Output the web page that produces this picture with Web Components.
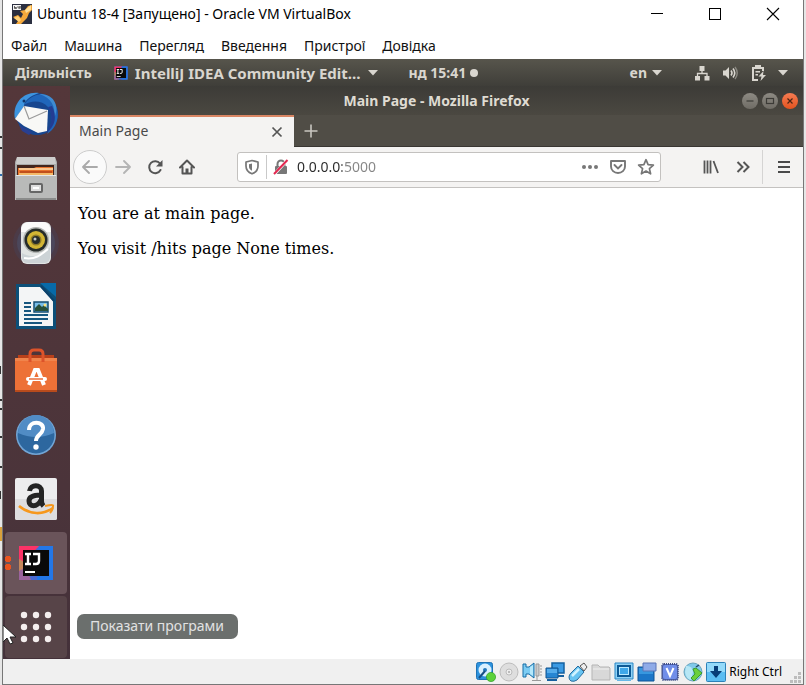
<!DOCTYPE html>
<html lang="uk">
<head>
<meta charset="utf-8">
<title>Ubuntu 18-4 [Запущено] - Oracle VM VirtualBox</title>
<style>
html,body{margin:0;height:100%}
body{background:#fff;overflow:hidden}
</style>
</head>
<body>
<vm-desktop></vm-desktop>
<script>
const ICONS = {
vbox:['0 0 20 20',`<rect width="20" height="20" fill="#2b2f40"/><path d="M1 13l5-2 3 3 2-4-3-3 5-1 3-4 4-1v5l-3 3-2 5-6 6H4l2-3z" fill="#f6a93b"/><path d="M13 6l6-5v5l-5 3z" fill="#ffdf98"/><path d="M2 14l4-2 3 4-2 2z" fill="#ffd27a"/><rect x="1" y="1" width="8" height="5" fill="#f6f6f6"/><path d="M2.500 2v2.500h2v-1h-2M6 2v2h2V2v3" stroke="#444" stroke-width=".8" fill="none"/>`],
min:['0 0 14 14','<path d="M1 6.500h12" stroke="#000"/>'],
max:['0 0 14 14','<rect x="1.500" y="1.500" width="11" height="11" stroke="#000" fill="none"/>'],
close:['0 0 14 14','<path d="M1 1l12 12M13 1L1 13" stroke="#000" stroke-width="1.100"/>'],
caret:['0 0 10 6','<path d="M0 0h10L5 5.500z" fill="currentColor"/>'],
dot:['0 0 8 8','<circle cx="4" cy="4" r="4" fill="currentColor"/>'],
net:['0 0 16 16','<path d="M5.500 1h5v5h-5zM1 11h5v4.500H1zM10.500 11h5v4.500h-5z" fill="currentColor"/><path d="M8 6v2.500M3.500 11V8.500h9.500V11" stroke="currentColor" fill="none" stroke-width="1.300"/>'],
vol:['0 0 16 16','<path d="M1 5.500h2.500L7 2v12l-3.500-3.500H1z" fill="currentColor"/><path d="M9 5.500q2 2.500 0 5M11 3.500q3.500 4.500 0 9" stroke="currentColor" fill="none" stroke-width="1.600"/><path d="M13 2q4.500 6 0 12" stroke="#8a8880" fill="none" stroke-width="1.400"/>'],
bat:['0 0 16 18','<path d="M6 3V2h4v1M8 16H3V4h10v3" stroke="currentColor" stroke-width="2" fill="none"/><path d="M5.500 7H10v1.500H5.500zM5.500 10H8v1.500H5.500zM13.500 7l-5 5.500h3l-1 4.500 5.500-6h-3z" fill="currentColor"/>'],
wmin:['0 0 16 16','<path d="M4.500 8h7" stroke="#3c3b37" stroke-width="1.200"/>'],
wmax:['0 0 16 16','<rect x="4.500" y="5.500" width="7" height="5" stroke="#3c3b37" stroke-width="1.200" fill="none"/>'],
wclose:['0 0 16 16','<path d="M5.500 5.500l5 5M10.500 5.500l-5 5" stroke="#4a2414" stroke-width="1.200"/>'],
x:['0 0 12 12','<path d="M1.500 1.500l9 9M10.500 1.500l-9 9" stroke="#555" stroke-width="1.700"/>'],
plus:['0 0 14 14','<path d="M7 .5v13M.5 7h13" stroke="#c9c6c0" stroke-width="1.600"/>'],
back:['0 0 16 16','<path d="M15 8H1.500M7 2L1 8l6 6" fill="none" stroke="#aaa" stroke-width="1.800" stroke-linecap="round" stroke-linejoin="round"/>'],
fwd:['0 0 16 16','<path d="M1 8h13.500M9 2l6 6-6 6" fill="none" stroke="#b4b4b4" stroke-width="1.800" stroke-linecap="round" stroke-linejoin="round"/>'],
reload:['0 0 16 16','<path d="M13.500 11A6 6 0 1 1 13 4.500" fill="none" stroke="#555" stroke-width="2" stroke-linecap="round"/><path d="M15.500 1v6.500H9z" fill="#555"/>'],
home:['0 0 16 16','<path d="M1 8.500l7-7 7 7M3.500 8v6.500h9V8" fill="none" stroke="#555" stroke-width="2" stroke-linecap="round" stroke-linejoin="round"/><path d="M6.500 9.500h3V15h-3z" fill="#555"/>'],
shield:['0 0 16 16','<path d="M8 1.500L14 3v4c0 4-2.500 6.500-6 7.800C4.500 13.500 2 11 2 7V3z" fill="none" stroke="#777" stroke-width="1.700" stroke-linejoin="round"/><path d="M8 4.500l-3 .8V7.500c0 2 1.200 3.500 3 4.300z" fill="#777"/>'],
lock:['0 0 16 16','<path d="M4.500 8V5a3.500 3.500 0 0 1 7 0v3" fill="none" stroke="#777" stroke-width="2"/><rect x="2" y="7" width="12" height="8" rx="1" fill="#777"/><path d="M1.500 15L14.500 1" stroke="#fff" stroke-width="3"/><path d="M1 15L14.500 1" stroke="#e22850" stroke-width="2"/>'],
dots:['0 0 18 18','<g fill="#777"><circle cx="3" cy="9" r="2"/><circle cx="9" cy="9" r="2"/><circle cx="15" cy="9" r="2"/></g>'],
pocket:['0 0 18 18','<path d="M2 3h14v5.500a7 6.500 0 0 1-14 0z" fill="none" stroke="#777" stroke-width="1.900" stroke-linejoin="round"/><path d="M5.500 7L9 10.500 12.500 7" fill="none" stroke="#777" stroke-width="1.900" stroke-linecap="round"/>'],
star:['0 0 18 18','<path d="M9 1.700l2.100 4.900 5.300.5-4 3.500 1.200 5.200L9 13l-4.600 2.800 1.200-5.200-4-3.500 5.300-.5z" fill="none" stroke="#777" stroke-width="1.700" stroke-linejoin="round"/>'],
lib:['0 0 18 18','<path d="M2.500 2.500v13M5.500 2.500v13M8.500 2.500v13M11.500 3l4.500 12" stroke="#555" stroke-width="1.800"/>'],
more:['0 0 16 16','<path d="M2.500 3l5 5-5 5M8.500 3l5 5-5 5" stroke="#555" stroke-width="2" fill="none"/>'],
burger:['0 0 14 14','<path d="M1 2h12M1 7h12M1 12h12" stroke="#4a4a4a" stroke-width="1.800"/>'],
bird:['0 0 48 48','<circle cx="25" cy="23" r="21" fill="#17468f"/><path d="M3 28C0 12 12 0 27 2c-9 3-15 8-15 13L6 24z" fill="#3d94df"/><path d="M12 14C18 4 31-1 40 9c10 11 6 28-5 34 5-9 7-19 1-27-6-7-17-7-24-2z" fill="#2066ba"/><path d="M27 3c12 3 17 13 15 24 6-10 1-25-15-24z" fill="#3f8bd2"/><path d="M36 16c6 9 3 20-2 26 10-7 11-17 6-27z" fill="#233c92"/><path d="M3 28l9-13 24 4-1 21-9 2-14-7z" fill="#f8f8f6"/><path d="M12 15l5 13 18-8" fill="none" stroke="#9a9a9a" stroke-width="1.200"/><path d="M7 34l5 3 8 4-3 3-7-4z" fill="#293f91"/><circle cx="12" cy="10" r="1.500" fill="#12356a"/>'],
files:['0 0 48 48','<path d="M5 2h38l2 5v37H3V7z" fill="#a9aaa9"/><path d="M5 2h38l1 7H4z" fill="#cdcdcc"/><rect x="5" y="10" width="37" height="12" fill="#43251c"/><path d="M6 13h16l2-1h17v12H6z" fill="#e8722c"/><path d="M7 14h34" stroke="#ffe3af" stroke-width="1.500"/><path d="M8 17h32" stroke="#b44517" stroke-width="1.500"/><path d="M7 18h34v3H7z" fill="#f5ba68"/><path d="M3 20h42v25H3z" fill="#b9bab9"/><path d="M4 20.500h40" stroke="#e7e7e6"/><path d="M4 44h40" stroke="#8a8b8a" stroke-width="2"/><rect x="18" y="29" width="12" height="8" rx="1" fill="#ddd" stroke="#666" stroke-width="2"/><path d="M21 33h6" stroke="#fff" stroke-width="2"/>'],
rhythm:['0 0 48 48','<circle cx="24" cy="24" r="23" fill="#394c77" opacity=".22"/><circle cx="24" cy="24" r="19" fill="#4b6a99" opacity=".25"/><rect x="9" y="3" width="30" height="42" rx="6" fill="#e1e4e3"/><path d="M10 34c10 6 22 3 28-6v11q-1 5-6 5H16q-5 0-6-5z" fill="#ccd3d6"/><path d="M9 13q0-10 8-10h14q7 0 8 10" fill="#fafafa"/><circle cx="24" cy="21" r="13" fill="#b0b3b1"/><circle cx="24" cy="21" r="11.500" fill="#252b29"/><circle cx="24" cy="21" r="9" fill="#d2b534"/><circle cx="24" cy="21" r="5.500" fill="#8f7b27"/><circle cx="24" cy="21" r="4" fill="#262c2b"/><circle cx="23" cy="20" r="1.500" fill="#c4c9c8"/><path d="M12 39c11 2 17-3 24-9" stroke="#fff" stroke-width="2" fill="none"/>'],
writer:['0 0 48 48','<path d="M4 1h27l13 13v32H4z" fill="#0c4f78"/><path d="M28 0h16v14z" fill="#076aa8"/><path d="M7 4h21l13 14v25H7z" fill="#f3f5f6"/><path d="M29 3l13 15" stroke="#0b416b" stroke-width="2"/><path d="M12 20h7M12 24h7M12 28h7M12 32h24M12 36h24M12 40h18" stroke="#17577f" stroke-width="2"/><rect x="22" y="19" width="14" height="10" fill="#78bde8" stroke="#164c70" stroke-width="1.500"/><path d="M23 28v-3l4-4 3 3 2-2 4 4v2z" fill="#294f38"/><circle cx="33" cy="22" r="1.500" fill="#ffe27c"/>'],
bag:['0 0 48 48','<path d="M6 8h36v7H6z" fill="#b9401a"/><path d="M3 11h42v34H3z" fill="#ed7137"/><path d="M3 11h42v3H3z" fill="#f0844c"/><path d="M3 43h42v2H3z" fill="#b84b1c"/><path d="M18 15V7q0-4 4-4h5q4 0 4 4v8" stroke="#dc532a" stroke-width="3" fill="none"/><path d="M17 38l6-15h3l6 15" stroke="#fff" stroke-width="4" fill="none"/><path d="M16 32h17" stroke="#fff" stroke-width="4" stroke-linecap="round"/><path d="M17 32h14" stroke="#e8642c" stroke-width="1.400"/>'],
help:['0 0 48 48','<circle cx="24" cy="24" r="20" fill="#72a5d5"/><circle cx="24" cy="24" r="18.500" fill="#2d679f"/><path d="M6 22a18 18 0 0 1 36 0q-18 8-36 0z" fill="#518cc5"/><path d="M17 19c0-10 15-9 14-1-1 6-7 6-7 12" stroke="#fff" stroke-width="4" fill="none"/><circle cx="24" cy="36" r="2.700" fill="#fff"/>'],
amazon:['0 0 48 48','<rect x="3" y="3" width="42" height="42" rx="2" fill="#ededee"/><path d="M3 24h42v19q0 2-2 2H5q-2 0-2-2z" fill="#dddddf"/><path d="M17.500 16c1-7 12-7 12 0v10q0 3 2 5M29 20c-7 0-12 1-12 6 0 6 8 7 12-1" fill="none" stroke="#242424" stroke-width="5"/><path d="M7 31c11 9 24 9 34 2" stroke="#f6981d" stroke-width="2.700" fill="none"/><path d="M33 31q9-2 8 0 0 4-3 7" stroke="#f6981d" stroke-width="2" fill="none"/>'],
ij:['0 0 36 36','<rect x="1" y="1" width="34" height="34" fill="#4969d1"/><path d="M1 1h20L7 16 1 17z" fill="#fb3367"/><path d="M21 1h14v34H19z" fill="#2377e8"/><path d="M1 14l7 4v17H1z" fill="#c5875b"/><path d="M1 26l7-4 5 13H1z" fill="#9a639d"/><rect x="5" y="5" width="26" height="26" fill="#0a0a0a"/><path d="M7 9h6M10 9v10M7 19h6M15 9h6v7q0 3-3 3h-3" stroke="#fff" stroke-width="2.400" fill="none"/><path d="M7 27h10" stroke="#fff" stroke-width="2"/>'],
apps:['0 0 48 48','<g fill="#f4eeee">'+[12,24,36].map(y=>[12,24,36].map(x=>`<circle cx="${x}" cy="${y}" r="3.200"/>`).join('')).join('')+'</g>'],
pointer:['0 0 14 20','<path d="M0 0v17l4-4 3 6 3-1-3-6h6z" fill="#fff" stroke="#222"/>'],
hdd:['0 0 20 20','<rect x=".5" y=".5" width="16" height="17" rx="2" fill="#2d92dd" stroke="#1d73b6"/><circle cx="9" cy="8" r="6.500" fill="#d9f0ff"/><circle cx="9" cy="8" r="2" fill="#2377ba"/><path d="M3 16L9 9" stroke="#174f85" stroke-width="2"/><circle cx="15" cy="15" r="4.600" fill="#5bd13b" stroke="#319e25" stroke-width=".7"/>'],
cd:['0 0 20 20','<circle cx="10" cy="10" r="9" fill="#dedede" stroke="#bcbcbc"/><circle cx="10" cy="10" r="3" fill="#eee" stroke="#bbb"/><circle cx="10" cy="10" r="1" fill="#aaa"/>'],
audio:['0 0 20 20','<path d="M1 2h3v3h3l5-4v15l-5-4H4v3H1z" fill="#7cccf3" stroke="#176da5"/><path d="M8 5v7l3 2V3z" fill="#b5e8fb"/><path d="M14 2h3v12h-3z" fill="#ccc" stroke="#999"/><path d="M18 4h2M18 7h2M18 10h2M18 13h2M15 14v4M10 18.500h9" stroke="#999"/>'],
lan:['0 0 20 20','<path d="M7 1h12v10H7z" fill="#3a9ae4" stroke="#1561a0" stroke-width="1.500"/><path d="M12 14h7" stroke="#1560a0" stroke-width="2"/><path d="M1 6h12v10H1z" fill="#2786d3" stroke="#12558f"/><path d="M2 7h10v4H2z" fill="#55aceb"/><path d="M2 18h10" stroke="#1560a0" stroke-width="2"/>'],
usb:['0 0 20 20','<path d="M12 4l4-3 3 4-3 4z" fill="#eee" stroke="#555"/><path d="M10 4l6 6-7 8q-3 2-6 1-2-1-2-4 0-2 2-4z" fill="#68c4f1" stroke="#276d9f"/><path d="M4 14l7-7" stroke="#d0f3ff" stroke-width="2.500"/>'],
folder:['0 0 20 20','<path d="M1 3h6l2 2h9l1 1v12H1z" fill="#d8d8d8" stroke="#b5b5b5"/><path d="M2 7h16" stroke="#e4e4e4" stroke-width="2"/>'],
screen:['0 0 20 20','<path d="M1 1h18v16H1z" fill="#8fd2f6" stroke="#2a87c5"/><path d="M4 4h12v10H4z" fill="#b9e9ff" stroke="#0d5a96" stroke-width="2"/><path d="M6 6h8v6H6z" fill="#3fa8ea"/><path d="M3 18.500h14" stroke="#67b9e8"/>'],
record:['0 0 20 20','<path d="M1 5h16v14H1z" fill="#1c76c8" stroke="#0d5496"/><path d="M2 6h14v6H2z" fill="#3897df"/><path d="M6 1h13v8H6z" fill="#8fabe8" stroke="#5b75b6"/>'],
cpu:['0 0 20 20','<rect x="2" y="2" width="16" height="16" rx="2" fill="#5468b5" stroke="#3f4e89" stroke-width="2" stroke-dasharray="1 1"/><rect x="3" y="3" width="14" height="14" rx="2" fill="#708ee9"/><path d="M6.500 6l3.500 8 3.500-8" fill="none" stroke="#fff" stroke-width="2"/>'],
mouse:['0 0 20 20','<circle cx="10" cy="10" r="9" fill="#80c9e9" stroke="#6aa5bd"/><path d="M3 4q6-1 7 6l-2 8q-5-1-6-8z" fill="#b7e7f5"/><path d="M10 7l3-1 6 5-8 8-3-3 4-4z" fill="#6bd03c" stroke="#3a9a30"/><path d="M13 5l3-2" stroke="#246" stroke-width="1.500"/>'],
key:['0 0 20 20','<rect x=".5" y=".5" width="19" height="19" rx="1" fill="#5bbdf2" stroke="#2c81b8"/><path d="M1 1h18v9H1z" fill="#94dafa"/><path d="M8 4h4v5h4l-6 7-6-7h4z" fill="#073d77"/>'],
grip:['0 0 12 12','<path d="M8 0h3v3H8zM4 4h3v3H4zM8 4h3v3H8zM0 8h3v3H0zM4 8h3v3H4zM8 8h3v3H8z" fill="#bdbdbd"/>']
};

const ic = (name, w = 16, h = w) => `<vector-icon name="${name}" style="--w:${w}px;--h:${h}px"></vector-icon>`;

function define(tag, css, html) {
  const t = document.createElement('template');
  t.innerHTML = `<style>
*{box-sizing:border-box}
button{font:inherit;color:inherit;background:none;border:0;padding:0;margin:0;display:flex;align-items:center;justify-content:center;white-space:nowrap}
${css}</style>${html}`;
  customElements.define(tag, class extends HTMLElement {
    constructor() {
      super();
      this.attachShadow({ mode: 'open' }).appendChild(t.content.cloneNode(true));
    }
  });
}

customElements.define('vector-icon', class extends HTMLElement {
  connectedCallback() {
    if (this.shadowRoot) return;
    const [box, body] = ICONS[this.getAttribute('name')];
    this.attachShadow({ mode: 'open' }).innerHTML =
      `<style>:host{display:block;flex:none;width:var(--w);height:var(--h)}svg{display:block;width:100%;height:100%}</style><svg viewBox="${box}" aria-hidden="true">${body}</svg>`;
  }
});

define('host-titlebar', `
:host{display:flex;align-items:center;height:28px;padding:0 10px 0 9px;gap:5px;font:14px/20px "Noto Sans",sans-serif;color:#000}
span{flex:1;white-space:nowrap}
nav{display:flex;gap:18px}
button{width:40px;height:28px}`,
`${ic('vbox',20)}<span><slot></slot></span><nav><button aria-label="Згорнути">${ic('min',14)}</button><button aria-label="Розгорнути">${ic('max',14)}</button><button aria-label="Закрити">${ic('close',14)}</button></nav>`);

define('host-menubar', `
:host{display:flex;align-items:center;height:31px;padding:4px 8px 0;gap:17px;font:14px/20px "Noto Sans",sans-serif;color:#111}`,
['Файл','Машина','Перегляд','Введення','Пристрої','Довідка'].map(t=>`<button>${t}</button>`).join(''));

define('gnome-topbar', `
:host{display:flex;align-items:center;height:27px;padding:0 15px 0 12px;font:bold 14px/20px "Noto Sans",sans-serif;color:#d9d6cf;background:linear-gradient(#57554c,#3f3e39)}
.app{margin-left:22px;gap:7px;font-size:15px}
.clock{margin-left:31px;gap:4px}
.en{margin-left:auto;gap:5px}
.sys{margin-left:32px;gap:12px}`,
`<button>Діяльність</button><button class="app">${ic('ij',14)}IntelliJ IDEA Community Edit…${ic('caret',10,6)}</button><button class="clock">нд 15:41${ic('dot',8)}</button><button class="en">en${ic('caret',10,6)}</button><button class="sys" aria-label="Система">${ic('net')}${ic('vol')}${ic('bat',16,18)}${ic('caret',10,6)}</button>`);

define('dock-item', `
:host{display:block;flex:none;width:62px;height:62px;position:relative;border-radius:4px}
button{width:100%;height:100%}
:host([active]){background:#6a545a}
:host([apps]){background:#574448}
i{display:none;position:absolute;left:0;top:24px;width:6px;height:14px;background:radial-gradient(circle at 3px 3px,#e95420 3px,transparent 3px) 0 0/6px 8px}
:host([active]) i{display:block}`,
`<button><slot></slot></button><i></i>`);

define('app-dock', `
:host{display:flex;flex-direction:column;justify-content:flex-end;align-items:center;gap:2px;padding:0 1px 1px 0;width:67px;overflow:hidden;background:linear-gradient(#54373a,#4b343a 70%,#44313a)}`,
['bird','files','rhythm','writer','bag','help','amazon'].map(n=>`<dock-item>${ic(n,48)}</dock-item>`).join('')+
`<dock-item active>${ic('ij',36)}</dock-item><dock-item apps>${ic('apps',48)}</dock-item>`);

define('browser-titlebar', `
:host{display:grid;grid-template-columns:1fr auto 1fr;align-items:center;height:29px;padding:0 5px;font:bold 14px/20px "Noto Sans",sans-serif;color:#dfdbd2;background:linear-gradient(#3c3b37,#4b4841)}
h1{grid-column:2;font:inherit;margin:0}
nav{display:flex;gap:4px;justify-content:flex-end}
button{width:16px;height:16px;border-radius:50%;background:linear-gradient(#8d8a83,#6f6c65)}
button.c{background:linear-gradient(#f67b52,#e2531f)}`,
`<h1><slot></slot></h1><nav><button aria-label="Minimize">${ic('wmin')}</button><button aria-label="Maximize">${ic('wmax')}</button><button class="c" aria-label="Close">${ic('wclose')}</button></nav>`);

define('browser-tabs', `
:host{display:flex;height:32px;background:#504d46;box-shadow:inset 0 -1px #393632;font:14px/20px "Noto Sans",sans-serif;color:#4a4a4a}
.tab{display:flex;align-items:center;justify-content:space-between;width:224px;padding:0 11px 0 9px;background:#f4f3f2;border-top:2px solid #d98664}
.tab span{padding-bottom:2px}
.add{width:34px}`,
`<div class="tab"><span><slot></slot></span><button aria-label="Close tab">${ic('x',12)}</button></div><button class="add" aria-label="New tab">${ic('plus',14)}</button>`);

define('browser-toolbar', `
:host{display:flex;align-items:center;height:41px;padding:0 3px;background:#f4f3f2;border-bottom:1px solid #c4c2c0}
button{width:32px;height:32px}
.back{width:34px;height:34px;border:1px solid #ccc;border-radius:50%;background:#fafafa}
label{display:flex;align-items:center;flex:1;height:30px;margin:0 34px;padding:0 0 0 6px;background:#fff;border:1px solid #c3c1bf;border-radius:3px}
label button{width:28px;height:28px}
label .s{width:16px}
.bar{width:1px;height:24px;margin:0 6px;background:#c9c9c9}
input{flex:1;min-width:0;margin-left:8px;padding:0;border:0;outline:0;height:20px;font:14px/20px "Noto Sans",sans-serif;color:#777;-webkit-text-fill-color:transparent;background:linear-gradient(90deg,#2a2a2a 45px,#858585 45px);-webkit-background-clip:text;background-clip:text}
.sep{width:1px;height:34px;margin:0 5px 0 3px;background:#d5d4d3}`,
`<button class="back" aria-label="Back">${ic('back')}</button><button aria-label="Forward">${ic('fwd')}</button><button aria-label="Reload">${ic('reload')}</button><button aria-label="Home">${ic('home')}</button>
<label><button class="s" aria-label="Protection">${ic('shield')}</button><span class="bar"></span><button class="s" aria-label="Connection">${ic('lock')}</button><input value="0.0.0.0:5000" aria-label="Address"><button aria-label="Page actions">${ic('dots',18)}</button><button aria-label="Pocket">${ic('pocket',18)}</button><button aria-label="Bookmark">${ic('star',18)}</button></label>
<button aria-label="Library">${ic('lib',18)}</button><button aria-label="More tools">${ic('more')}</button><span class="sep"></span><button aria-label="Menu">${ic('burger',14)}</button>`);

define('browser-window', `
:host{display:flex;flex-direction:column;min-width:0;background:#fff}
main{flex:1;padding:0 8px;font:16px/19px "DejaVu Serif",serif;color:#000}
p{margin:16px 0}`,
`<browser-titlebar>Main Page - Mozilla Firefox</browser-titlebar><browser-tabs>Main Page</browser-tabs><browser-toolbar></browser-toolbar><main><p>You are at main page.</p><p>You visit /hits page None times.</p></main>`);

define('host-statusbar', `
:host{display:flex;align-items:center;justify-content:flex-end;gap:3px;height:25px;padding-right:1px;background:#f0f0f0;font:12px/16px "Noto Sans",sans-serif;color:#000}
span{margin:0 5px 0 0;white-space:nowrap}
.grip{align-self:flex-end}`,
['hdd','cd','audio','lan','usb','folder','screen','record','cpu','mouse','key'].map(n=>`<button aria-label="${n}">${ic(n,20)}</button>`).join('')+
`<span>Right Ctrl</span><div class="grip">${ic('grip',12)}</div>`);

define('vm-desktop', `
:host{display:block;height:100%;padding:0 2px;background:#e6e6e6;position:relative}
.win{display:flex;flex-direction:column;height:100%;background:#fff;border:solid #777;border-width:0 1px 1px}
.guest{flex:1;min-height:0;display:grid;grid-template-columns:67px 1fr}
.tip{position:absolute;left:77px;bottom:46px;padding:2px 14px 3px 13px;border-radius:7px;background:#6b6f6d;color:#e2e2e2;font:14px/20px "Noto Sans",sans-serif}
.ptr{position:absolute;left:3px;bottom:40px}
.behind{position:absolute;left:0;top:0;width:2px;height:100%}`,
`<div class="win"><host-titlebar>Ubuntu 18-4 [Запущено] - Oracle VM VirtualBox</host-titlebar><host-menubar></host-menubar><gnome-topbar></gnome-topbar><div class="guest"><app-dock></app-dock><browser-window></browser-window></div><host-statusbar></host-statusbar></div>
<svg class="behind" aria-hidden="true"><path d="M0 137h2M0 148h2M0 366v8M0 400h2M0 409h2M0 437h2M0 467h2M0 491v8" stroke="#333" stroke-width="2"/><path d="M0 175h2" stroke="#2f6eae" stroke-width="2"/><path d="M1 527v14" stroke="#d9a03a" stroke-width="2"/></svg>
<div class="tip" role="tooltip">Показати програми</div><div class="ptr">${ic('pointer',14,20)}</div>`);
</script>
</body>
</html>
